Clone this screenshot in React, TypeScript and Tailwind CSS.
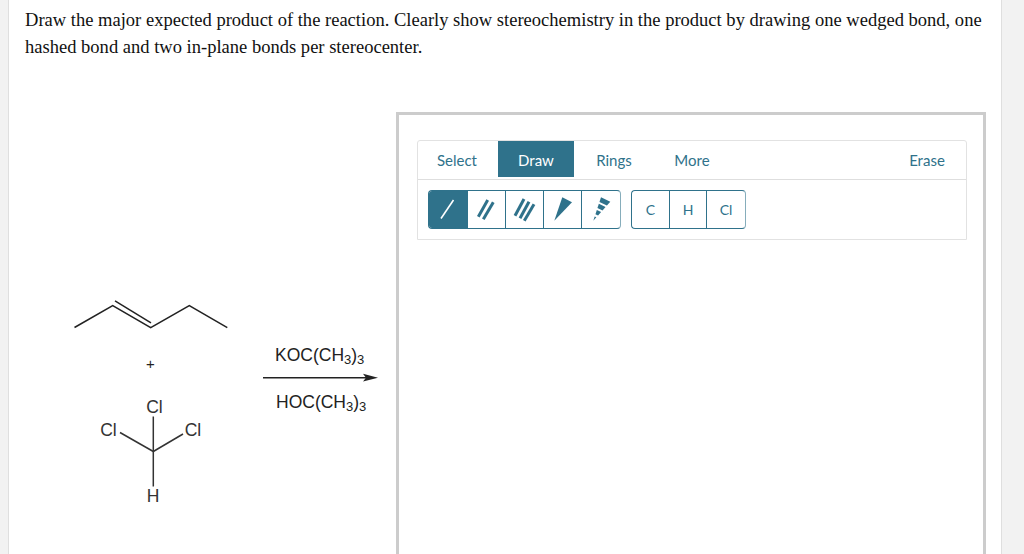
const TEAL = "#2f728b";

function BondIcon({ children }: { children: React.ReactNode }) {
  return (
    <svg width="37" height="37" viewBox="1 1 37 37" className="block shrink-0">
      {children}
    </svg>
  );
}

function Reaction() {
  const labelFont = { fontFamily: '"Liberation Sans", Arial, sans-serif' };
  return (
    <svg width="371" height="442" viewBox="25 112 371 442" className="shrink-0" style={labelFont}>
      {/* alkene */}
      <g stroke="#222" strokeWidth="1.5" fill="none">
        <polyline points="74.5,327.5 112.7,305.7 150.7,327.7 189.3,305.7 227.3,327.7" />
        <line x1="115" y1="300.8" x2="151" y2="322.8" />
      </g>
      <text x="150.5" y="369" fontSize="15" textAnchor="middle" fill="#222">+</text>
      {/* CHCl3 */}
      <g stroke="#333" strokeWidth="1.5" fill="none">
        <line x1="153.3" y1="416.5" x2="153.3" y2="486.5" />
        <line x1="120" y1="432.5" x2="153.3" y2="451.5" />
        <line x1="183" y1="434" x2="153.3" y2="451.5" />
      </g>
      <g fontSize="17.5" fill="#333">
        <text x="154.5" y="413" textAnchor="middle">Cl</text>
        <text x="108.5" y="436" textAnchor="middle">Cl</text>
        <text x="193" y="436" textAnchor="middle">Cl</text>
        <text x="153" y="502" textAnchor="middle">H</text>
      </g>
      {/* reagents */}
      <text x="275" y="361" fontSize="17.5" fill="#222">
        KOC(CH<tspan fontSize="13" dy="3">3</tspan><tspan dy="-3">)</tspan><tspan fontSize="13" dy="3">3</tspan>
      </text>
      <text x="276" y="408" fontSize="17.5" fill="#222">
        HOC(CH<tspan fontSize="13" dy="3">3</tspan><tspan dy="-3">)</tspan><tspan fontSize="13" dy="3">3</tspan>
      </text>
      <line x1="263" y1="377.7" x2="368" y2="377.7" stroke="#222" strokeWidth="1.4" />
      <polygon points="363,373.7 378,377.7 363,381.5 366,377.7" fill="#222" />
    </svg>
  );
}

function Toolbar() {
  const tabClass = "flex h-[36px] items-center justify-center pt-[2px] text-[#2f728b]";
  const cellClass = "flex h-full w-[38px] items-center justify-center border-r border-[#2f728b] text-[14px] text-[#2f728b]";
  return (
    <div className="ml-[18px] mt-[25px] h-[100px] w-[550px] rounded-t-[3px] border border-[#e2e2e2] font-['Lato',sans-serif] text-[15px]">
      {/* tabs */}
      <div className="flex h-[39px] border-b border-[#dedede]">
        <button className={`${tabClass} w-[80px] pr-[2px]`}>Select</button>
        <button className="flex h-[36px] w-[76px] items-center justify-center bg-[#2f728b] pt-[2px] text-white">Draw</button>
        <button className={`${tabClass} w-[80px]`}>Rings</button>
        <button className={`${tabClass} w-[76px]`}>More</button>
        <button className={`${tabClass} ml-auto w-[78px]`}>Erase</button>
      </div>

      {/* bond and atom buttons */}
      <div className="ml-[10px] mt-[10px] flex gap-[10px]">
        <div className="flex h-[39px] overflow-hidden rounded-[4px] border border-[#2f728b] border-r-[#86adbb]">
          <button className="flex h-full w-[39px] items-center justify-start bg-[#2f728b]">
            <BondIcon>
              <line x1="13" y1="28.5" x2="25.5" y2="10" stroke="white" strokeWidth="1.6" />
            </BondIcon>
          </button>
          <button className={cellClass}>
            <BondIcon>
              <g stroke={TEAL} strokeWidth="3">
                <line x1="11.3" y1="26.7" x2="20.7" y2="10" />
                <line x1="16.3" y1="29.3" x2="26.3" y2="12.3" />
              </g>
            </BondIcon>
          </button>
          <button className={cellClass}>
            <BondIcon>
              <g stroke={TEAL} strokeWidth="3">
                <line x1="10" y1="25.7" x2="19" y2="9" />
                <line x1="15" y1="28.3" x2="24" y2="11.7" />
                <line x1="19.3" y1="30.7" x2="29" y2="14.3" />
              </g>
            </BondIcon>
          </button>
          <button className={cellClass}>
            <BondIcon>
              <polygon points="11.3,30.7 19.3,7.3 29,12.3" fill={TEAL} />
            </BondIcon>
          </button>
          <button className="flex h-full w-[38px] items-center justify-start">
            <BondIcon>
              <g fill={TEAL}>
                <polygon points="12.3,30.7 13.69,26.49 15.36,27.28" />
                <polygon points="14.46,24.15 17.06,25.38 20.12,21.96 15.84,19.94" />
                <polygon points="16.46,18.06 21.48,20.44 24.54,17.02 17.84,13.85" />
                <polygon points="18.46,12 25.9,15.5 29.3,11.7 20,7.3" />
              </g>
            </BondIcon>
          </button>
        </div>
        <div className="flex h-[39px] overflow-hidden rounded-[4px] border border-[#2f728b] border-r-[#86adbb]">
          <button className={cellClass}>C</button>
          <button className="flex h-full w-[37px] items-center justify-center border-r border-[#2f728b] text-[14px] text-[#2f728b]">H</button>
          <button className="flex h-full w-[38px] items-center justify-center text-[14px] text-[#2f728b]">Cl</button>
        </div>
      </div>
    </div>
  );
}

export default function App() {
  return (
    <div className="h-[554px] overflow-hidden bg-[#f2f2f2] pl-[8px]">
      <div className="h-full w-[994px] border-x border-[#dfdfdf] bg-white pl-[16px]">
        <p className="h-[112px] w-[970px] pt-[6px] font-['Liberation_Serif',serif] text-[18.55px] leading-[27px] text-[#111]">
          Draw the major expected product of the reaction. Clearly show stereochemistry in the product by drawing one wedged bond, one hashed bond and two in-plane bonds per stereocenter.
        </p>

        <div className="flex">
          <Reaction />
          <div className="h-[480px] w-[590px] shrink-0 border-[3px] border-[#cccccc] bg-white">
            <Toolbar />
          </div>
        </div>
      </div>
    </div>
  );
}
